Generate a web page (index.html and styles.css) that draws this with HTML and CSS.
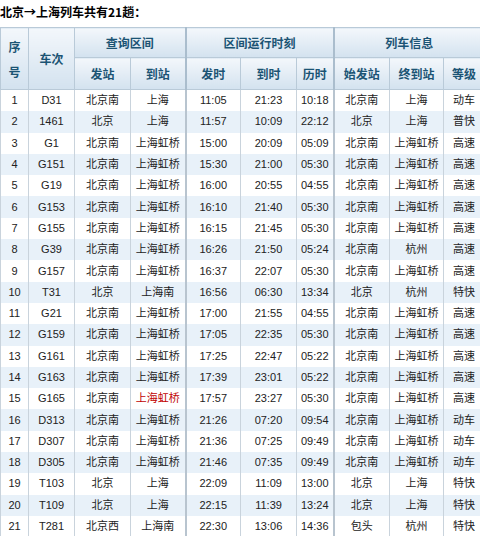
FILE: index.html
```html
<!DOCTYPE html>
<html lang="zh">
<head>
<meta charset="utf-8">
<link rel="stylesheet" href="styles.css">
</head>
<body>
<div class="title">北京→上海列车共有21趟：</div>
<table class="trains">
<colgroup>
<col class="c-no"><col class="c-train"><col class="c-st"><col class="c-st2"><col class="c-t"><col class="c-t2"><col class="c-dur"><col class="c-st3"><col class="c-st4"><col class="c-lv">
</colgroup>
<thead>
<tr class="h1">
<th rowspan="2" class="tall">序<br>号</th>
<th rowspan="2">车次</th>
<th colspan="2" class="grp">查询区间</th>
<th colspan="3" class="grp">区间运行时刻</th>
<th colspan="3">列车信息</th>
</tr>
<tr class="h2">
<th>发站</th><th class="grp">到站</th>
<th>发时</th><th>到时</th><th class="grp">历时</th>
<th>始发站</th><th>终到站</th><th>等级</th>
</tr>
</thead>
<tbody>
<tr><td>1</td><td>D31</td><td>北京南</td><td class="grp">上海</td><td>11:05</td><td>21:23</td><td class="grp">10:18</td><td>北京南</td><td>上海</td><td>动车</td></tr>
<tr><td>2</td><td>1461</td><td>北京</td><td class="grp">上海</td><td>11:57</td><td>10:09</td><td class="grp">22:12</td><td>北京</td><td>上海</td><td>普快</td></tr>
<tr><td>3</td><td>G1</td><td>北京南</td><td class="grp">上海虹桥</td><td>15:00</td><td>20:09</td><td class="grp">05:09</td><td>北京南</td><td>上海虹桥</td><td>高速</td></tr>
<tr><td>4</td><td>G151</td><td>北京南</td><td class="grp">上海虹桥</td><td>15:30</td><td>21:00</td><td class="grp">05:30</td><td>北京南</td><td>上海虹桥</td><td>高速</td></tr>
<tr><td>5</td><td>G19</td><td>北京南</td><td class="grp">上海虹桥</td><td>16:00</td><td>20:55</td><td class="grp">04:55</td><td>北京南</td><td>上海虹桥</td><td>高速</td></tr>
<tr><td>6</td><td>G153</td><td>北京南</td><td class="grp">上海虹桥</td><td>16:10</td><td>21:40</td><td class="grp">05:30</td><td>北京南</td><td>上海虹桥</td><td>高速</td></tr>
<tr><td>7</td><td>G155</td><td>北京南</td><td class="grp">上海虹桥</td><td>16:15</td><td>21:45</td><td class="grp">05:30</td><td>北京南</td><td>上海虹桥</td><td>高速</td></tr>
<tr><td>8</td><td>G39</td><td>北京南</td><td class="grp">上海虹桥</td><td>16:26</td><td>21:50</td><td class="grp">05:24</td><td>北京南</td><td>杭州</td><td>高速</td></tr>
<tr><td>9</td><td>G157</td><td>北京南</td><td class="grp">上海虹桥</td><td>16:37</td><td>22:07</td><td class="grp">05:30</td><td>北京南</td><td>上海虹桥</td><td>高速</td></tr>
<tr><td>10</td><td>T31</td><td>北京</td><td class="grp">上海南</td><td>16:56</td><td>06:30</td><td class="grp">13:34</td><td>北京</td><td>杭州</td><td>特快</td></tr>
<tr><td>11</td><td>G21</td><td>北京南</td><td class="grp">上海虹桥</td><td>17:00</td><td>21:55</td><td class="grp">04:55</td><td>北京南</td><td>上海虹桥</td><td>高速</td></tr>
<tr><td>12</td><td>G159</td><td>北京南</td><td class="grp">上海虹桥</td><td>17:05</td><td>22:35</td><td class="grp">05:30</td><td>北京南</td><td>上海虹桥</td><td>高速</td></tr>
<tr><td>13</td><td>G161</td><td>北京南</td><td class="grp">上海虹桥</td><td>17:25</td><td>22:47</td><td class="grp">05:22</td><td>北京南</td><td>上海虹桥</td><td>高速</td></tr>
<tr><td>14</td><td>G163</td><td>北京南</td><td class="grp">上海虹桥</td><td>17:39</td><td>23:01</td><td class="grp">05:22</td><td>北京南</td><td>上海虹桥</td><td>高速</td></tr>
<tr><td>15</td><td>G165</td><td>北京南</td><td class="grp hot">上海虹桥</td><td>17:57</td><td>23:27</td><td class="grp">05:30</td><td>北京南</td><td>上海虹桥</td><td>高速</td></tr>
<tr><td>16</td><td>D313</td><td>北京南</td><td class="grp">上海虹桥</td><td>21:26</td><td>07:20</td><td class="grp">09:54</td><td>北京南</td><td>上海虹桥</td><td>动车</td></tr>
<tr><td>17</td><td>D307</td><td>北京南</td><td class="grp">上海虹桥</td><td>21:36</td><td>07:25</td><td class="grp">09:49</td><td>北京南</td><td>上海虹桥</td><td>动车</td></tr>
<tr><td>18</td><td>D305</td><td>北京南</td><td class="grp">上海虹桥</td><td>21:46</td><td>07:35</td><td class="grp">09:49</td><td>北京南</td><td>上海虹桥</td><td>动车</td></tr>
<tr><td>19</td><td>T103</td><td>北京</td><td class="grp">上海</td><td>22:09</td><td>11:09</td><td class="grp">13:00</td><td>北京</td><td>上海</td><td>特快</td></tr>
<tr><td>20</td><td>T109</td><td>北京</td><td class="grp">上海</td><td>22:15</td><td>11:39</td><td class="grp">13:24</td><td>北京</td><td>上海</td><td>特快</td></tr>
<tr><td>21</td><td>T281</td><td>北京西</td><td class="grp">上海南</td><td>22:30</td><td>13:06</td><td class="grp">14:36</td><td>包头</td><td>杭州</td><td>特快</td></tr>
</tbody>
</table>
</body>
</html>
```

FILE: styles.css
```css
html, body {
  margin: 0;
  padding: 0;
  background: #ffffff;
  overflow: hidden;
}
body {
  width: 480px;
  font-family: "Liberation Sans", "Noto Sans CJK SC", sans-serif;
  color: #222;
}
.title {
  height: 27px;
  box-sizing: border-box;
  padding-top: 4px;
  padding-left: 0;
  font-size: 12px;
  line-height: 16px;
  font-weight: bold;
  color: #000;
  font-family: "Noto Sans CJK SC", sans-serif;
}
.trains {
  border-collapse: collapse;
  table-layout: fixed;
  width: 484px;
}
.c-no { width: 28px; }
.c-train { width: 46px; }
.c-st { width: 56px; }
.c-st2 { width: 55px; }
.c-t { width: 55px; }
.c-t2 { width: 56px; }
.c-dur { width: 37px; }
.c-st3 { width: 56px; }
.c-st4 { width: 54px; }
.c-lv { width: 41px; }

.trains th {
  border: 1px solid #b9cad8;
  background: linear-gradient(#f3f7fb, #d3e2ef);
  color: #1b5474;
  font-weight: bold;
  font-size: 12px;
  font-family: "Noto Sans CJK SC", sans-serif;
  padding: 0;
  text-align: center;
  line-height: 14px;
}
.trains th.tall { line-height: 25px; }
.trains tr.h1 th { height: 29px; }
.trains tr.h2 th { height: 31px; }
.trains th.grp { border-right: 2px solid #aabdcd; }

.trains td {
  height: 21.3px;
  padding: 0;
  text-align: center;
  font-size: 11px;
  line-height: 13px;
  border-left: 1px solid #c9d3dc;
  border-right: 1px solid #c9d3dc;
  color: #222;
}
.trains td.grp { border-right: 2px solid #b8c4cf; }
.trains tbody tr:nth-child(even) td { background: #e8f1f9; }
.trains td.hot { color: #c00000; }
```
